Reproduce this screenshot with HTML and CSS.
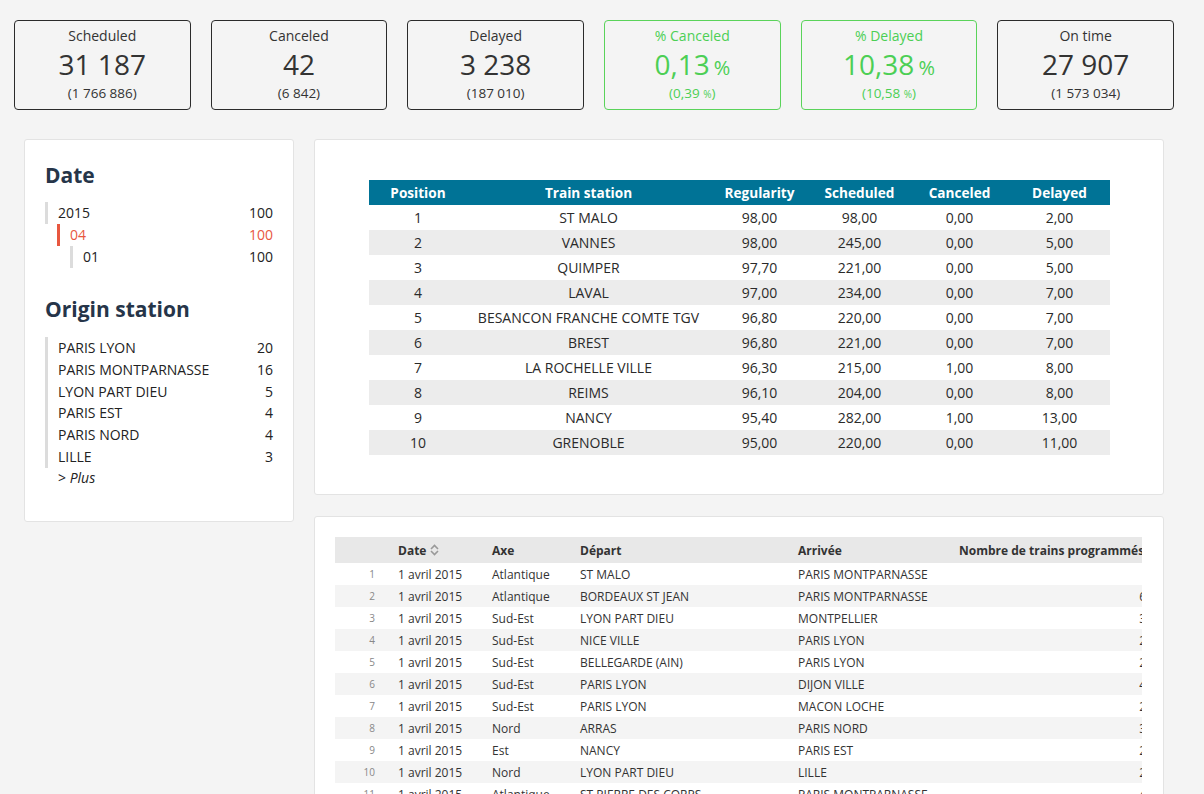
FILE: index.html
```html
<!DOCTYPE html>
<html>
<head>
<meta charset="utf-8">
<link rel="stylesheet" href="styles.css">
</head>
<body>
<div class="kpis">
  <div class="kpi"><div class="kpi-title">Scheduled</div><div class="kpi-value">31 187</div><div class="kpi-sub">(1 766 886)</div></div>
  <div class="kpi"><div class="kpi-title">Canceled</div><div class="kpi-value">42</div><div class="kpi-sub">(6 842)</div></div>
  <div class="kpi"><div class="kpi-title">Delayed</div><div class="kpi-value">3 238</div><div class="kpi-sub">(187 010)</div></div>
  <div class="kpi good"><div class="kpi-title">% Canceled</div><div class="kpi-value">0,13<span class="unit">%</span></div><div class="kpi-sub">(0,39 <span class="unit-s">%</span>)</div></div>
  <div class="kpi good"><div class="kpi-title">% Delayed</div><div class="kpi-value">10,38<span class="unit">%</span></div><div class="kpi-sub">(10,58 <span class="unit-s">%</span>)</div></div>
  <div class="kpi"><div class="kpi-title">On time</div><div class="kpi-value">27 907</div><div class="kpi-sub">(1 573 034)</div></div>
</div>

<div class="layout">
  <aside class="panel side">
    <h2 class="facet-title">Date</h2>
    <div class="tree">
      <div class="row lvl0"><span>2015</span><span>100</span></div>
      <div class="row lvl1 active"><span>04</span><span>100</span></div>
      <div class="row lvl2"><span>01</span><span>100</span></div>
    </div>
    <h2 class="facet-title second">Origin station</h2>
    <div class="list">
      <div class="row"><span>PARIS LYON</span><span>20</span></div>
      <div class="row"><span>PARIS MONTPARNASSE</span><span>16</span></div>
      <div class="row"><span>LYON PART DIEU</span><span>5</span></div>
      <div class="row"><span>PARIS EST</span><span>4</span></div>
      <div class="row"><span>PARIS NORD</span><span>4</span></div>
      <div class="row"><span>LILLE</span><span>3</span></div>
    </div>
    <div class="more">&gt; <em>Plus</em></div>
  </aside>

  <main class="main">
    <section class="panel rank">
      <table class="rank-table">
        <thead>
          <tr><th class="c-pos">Position</th><th class="c-st">Train station</th><th>Regularity</th><th>Scheduled</th><th>Canceled</th><th>Delayed</th></tr>
        </thead>
        <tbody>
          <tr><td>1</td><td>ST MALO</td><td>98,00</td><td>98,00</td><td>0,00</td><td>2,00</td></tr>
          <tr><td>2</td><td>VANNES</td><td>98,00</td><td>245,00</td><td>0,00</td><td>5,00</td></tr>
          <tr><td>3</td><td>QUIMPER</td><td>97,70</td><td>221,00</td><td>0,00</td><td>5,00</td></tr>
          <tr><td>4</td><td>LAVAL</td><td>97,00</td><td>234,00</td><td>0,00</td><td>7,00</td></tr>
          <tr><td>5</td><td>BESANCON FRANCHE COMTE TGV</td><td>96,80</td><td>220,00</td><td>0,00</td><td>7,00</td></tr>
          <tr><td>6</td><td>BREST</td><td>96,80</td><td>221,00</td><td>0,00</td><td>7,00</td></tr>
          <tr><td>7</td><td>LA ROCHELLE VILLE</td><td>96,30</td><td>215,00</td><td>1,00</td><td>8,00</td></tr>
          <tr><td>8</td><td>REIMS</td><td>96,10</td><td>204,00</td><td>0,00</td><td>8,00</td></tr>
          <tr><td>9</td><td>NANCY</td><td>95,40</td><td>282,00</td><td>1,00</td><td>13,00</td></tr>
          <tr><td>10</td><td>GRENOBLE</td><td>95,00</td><td>220,00</td><td>0,00</td><td>11,00</td></tr>
        </tbody>
      </table>
    </section>

    <section class="panel data">
      <div class="scroll">
        <table class="data-table">
          <thead>
            <tr>
              <th class="d-idx"></th>
              <th class="d-date">Date <svg class="sort" width="9" height="12" viewBox="0 0 9 12"><path d="M1 5 L4.5 1.5 L8 5" fill="none" stroke="#999" stroke-width="1.6"/><path d="M1 7 L4.5 10.5 L8 7" fill="none" stroke="#999" stroke-width="1.6"/></svg></th>
              <th class="d-axe">Axe</th>
              <th class="d-dep">Départ</th>
              <th class="d-arr">Arrivée</th>
              <th class="d-nb">Nombre de trains programmés</th>
            </tr>
          </thead>
          <tbody>
            <tr><td class="idx">1</td><td>1 avril 2015</td><td>Atlantique</td><td>ST MALO</td><td>PARIS MONTPARNASSE</td><td class="num">8</td></tr>
            <tr><td class="idx">2</td><td>1 avril 2015</td><td>Atlantique</td><td>BORDEAUX ST JEAN</td><td>PARIS MONTPARNASSE</td><td class="num">62</td></tr>
            <tr><td class="idx">3</td><td>1 avril 2015</td><td>Sud-Est</td><td>LYON PART DIEU</td><td>MONTPELLIER</td><td class="num">31</td></tr>
            <tr><td class="idx">4</td><td>1 avril 2015</td><td>Sud-Est</td><td>NICE VILLE</td><td>PARIS LYON</td><td class="num">24</td></tr>
            <tr><td class="idx">5</td><td>1 avril 2015</td><td>Sud-Est</td><td>BELLEGARDE (AIN)</td><td>PARIS LYON</td><td class="num">22</td></tr>
            <tr><td class="idx">6</td><td>1 avril 2015</td><td>Sud-Est</td><td>PARIS LYON</td><td>DIJON VILLE</td><td class="num">41</td></tr>
            <tr><td class="idx">7</td><td>1 avril 2015</td><td>Sud-Est</td><td>PARIS LYON</td><td>MACON LOCHE</td><td class="num">26</td></tr>
            <tr><td class="idx">8</td><td>1 avril 2015</td><td>Nord</td><td>ARRAS</td><td>PARIS NORD</td><td class="num">33</td></tr>
            <tr><td class="idx">9</td><td>1 avril 2015</td><td>Est</td><td>NANCY</td><td>PARIS EST</td><td class="num">25</td></tr>
            <tr><td class="idx">10</td><td>1 avril 2015</td><td>Nord</td><td>LYON PART DIEU</td><td>LILLE</td><td class="num">21</td></tr>
            <tr><td class="idx">11</td><td>1 avril 2015</td><td>Atlantique</td><td>ST PIERRE DES CORPS</td><td>PARIS MONTPARNASSE</td><td class="num">44</td></tr>
            <tr><td class="idx">12</td><td>1 avril 2015</td><td>Atlantique</td><td>RENNES</td><td>PARIS MONTPARNASSE</td><td class="num">38</td></tr>
          </tbody>
        </table>
      </div>
    </section>
  </main>
</div>
</body>
</html>
```

FILE: styles.css
```css
* { box-sizing: border-box; }
html, body { margin: 0; padding: 0; }
body {
  background: #f4f4f4;
  font-family: "Open Sans", "Liberation Sans", sans-serif;
  color: #333;
  width: 1204px;
  overflow: hidden;
  height: 794px;
}

.kpis {
  display: flex;
  gap: 20.2px;
  padding: 20px 0 0 14px;
}
.kpi {
  width: 176.5px;
  height: 90px;
  border: 1px solid #2b2b2b;
  border-radius: 4px;
  text-align: center;
  color: #333;
  padding-top: 6px;
}
.kpi.good { border-color: #5ad35a; color: #4ccf55; }
.kpi-title { font-size: 14px; line-height: 18px; }
.kpi-value { font-size: 28px; line-height: 36px; margin-top: 1px; }
.kpi-sub { font-size: 13.5px; line-height: 18px; margin-top: 2px; }
.unit { font-size: 20px; line-height: 1; margin-left: 4px; }
.unit-s { font-size: 10px; line-height: 1; }

.layout {
  display: flex;
  align-items: flex-start;
  gap: 20px;
  padding: 29px 0 0 24px;
}

.panel {
  background: #fff;
  border: 1px solid #e3e3e3;
  border-radius: 3px;
}

.side {
  width: 270px;
  padding: 21px 20px 33px 20px;
}
.facet-title {
  margin: 0;
  font-size: 21px;
  line-height: 28px;
  font-weight: 700;
  color: #263549;
}
.facet-title.second { margin-top: 27px; }
.tree { margin-top: 13px; }
.row {
  display: flex;
  justify-content: space-between;
  font-size: 14px;
  line-height: 22px;
  color: #222;
}
.tree .row { border-left: 3px solid #dcdcdc; padding-left: 10px; }
.tree .lvl1 { margin-left: 12px; }
.tree .lvl2 { margin-left: 25px; }
.tree .active { border-left-color: #e8573f; color: #e8573f; }
.list {
  margin-top: 14px;
  border-left: 3px solid #dcdcdc;
  padding-left: 10px;
}
.list .row { line-height: 21.8px; }
.more {
  font-size: 14px;
  line-height: 20px;
  padding-left: 13px;
  color: #222;
}

.main {
  width: 850px;
  display: flex;
  flex-direction: column;
  gap: 21px;
}

.rank { padding: 40px 0 39px 0; }
.rank-table {
  width: 741px;
  margin: 0 auto;
  border-collapse: collapse;
  font-size: 14px;
  text-align: center;
}
.rank-table th {
  background: #007396;
  color: #fff;
  font-weight: 700;
  font-size: 13.6px;
  height: 25px;
  padding: 0;
  width: 100px;
}
.rank-table th.c-pos { width: 99px; }
.rank-table th.c-st { width: 242px; }
.rank-table td { height: 25px; padding: 0; color: #2a2a2a; }
.rank-table tbody tr:nth-child(even) td { background: #ececec; }

.data { padding: 20px 20px 0 20px; height: 300px; }
.scroll { overflow: hidden; width: 807px; }
.data-table {
  border-collapse: collapse;
  font-size: 12px;
  width: 828px;
  table-layout: fixed;
  white-space: nowrap;
}
.data-table th {
  background: #e8e8e8;
  font-weight: 700;
  text-align: left;
  height: 26px;
  padding: 0 10px;
  color: #333;
}
.data-table th.d-idx { width: 53px; }
.data-table th.d-date { width: 94px; }
.data-table th.d-axe { width: 88px; }
.data-table th.d-dep { width: 218px; }
.data-table th.d-arr { width: 161px; }
.data-table th.d-nb { width: 214px; }
.sort { vertical-align: -1px; }
.data-table td { height: 22px; padding: 0 10px; color: #333; }
.data-table td.idx { text-align: right; font-size: 10px; color: #888; padding-right: 13px; }
.data-table td.num { text-align: right; }
.data-table tbody tr:nth-child(even) td { background: #f4f4f4; }
```
